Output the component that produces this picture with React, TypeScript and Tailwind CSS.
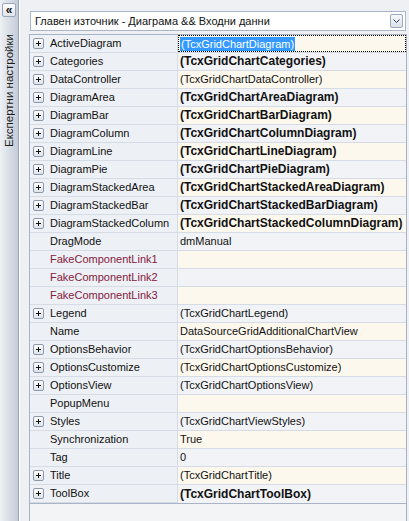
import React from 'react'

type Row = {
  name: string
  value?: string
  expand?: boolean
  bold?: boolean
  fake?: boolean
}

const rows: Row[] = [
  { name: 'ActiveDiagram', value: '(TcxGridChartDiagram)', expand: true },
  { name: 'Categories', value: '(TcxGridChartCategories)', expand: true, bold: true },
  { name: 'DataController', value: '(TcxGridChartDataController)', expand: true },
  { name: 'DiagramArea', value: '(TcxGridChartAreaDiagram)', expand: true, bold: true },
  { name: 'DiagramBar', value: '(TcxGridChartBarDiagram)', expand: true, bold: true },
  { name: 'DiagramColumn', value: '(TcxGridChartColumnDiagram)', expand: true, bold: true },
  { name: 'DiagramLine', value: '(TcxGridChartLineDiagram)', expand: true, bold: true },
  { name: 'DiagramPie', value: '(TcxGridChartPieDiagram)', expand: true, bold: true },
  { name: 'DiagramStackedArea', value: '(TcxGridChartStackedAreaDiagram)', expand: true, bold: true },
  { name: 'DiagramStackedBar', value: '(TcxGridChartStackedBarDiagram)', expand: true, bold: true },
  { name: 'DiagramStackedColumn', value: '(TcxGridChartStackedColumnDiagram)', expand: true, bold: true },
  { name: 'DragMode', value: 'dmManual' },
  { name: 'FakeComponentLink1', fake: true },
  { name: 'FakeComponentLink2', fake: true },
  { name: 'FakeComponentLink3', fake: true },
  { name: 'Legend', value: '(TcxGridChartLegend)', expand: true },
  { name: 'Name', value: 'DataSourceGridAdditionalChartView' },
  { name: 'OptionsBehavior', value: '(TcxGridChartOptionsBehavior)', expand: true },
  { name: 'OptionsCustomize', value: '(TcxGridChartOptionsCustomize)', expand: true },
  { name: 'OptionsView', value: '(TcxGridChartOptionsView)', expand: true },
  { name: 'PopupMenu' },
  { name: 'Styles', value: '(TcxGridChartViewStyles)', expand: true },
  { name: 'Synchronization', value: 'True' },
  { name: 'Tag', value: '0' },
  { name: 'Title', value: '(TcxGridChartTitle)', expand: true },
  { name: 'ToolBox', value: '(TcxGridChartToolBox)', expand: true, bold: true },
]

function PlusBox() {
  return (
    <svg width="11" height="11" viewBox="0 0 11 11" className="shrink-0">
      <defs>
        <linearGradient id="pb" x1="0" y1="0" x2="0" y2="1">
          <stop offset="0" stopColor="#ffffff" />
          <stop offset="1" stopColor="#dde2ea" />
        </linearGradient>
      </defs>
      <rect x="0.5" y="0.5" width="10" height="10" rx="1.5" fill="url(#pb)" stroke="#8d98aa" />
      <path d="M3 5.5H8M5.5 3V8" stroke="#111" strokeWidth="1" />
    </svg>
  )
}

export default function App() {
  return (
    <div
      className="flex h-[521px] w-[409px] overflow-hidden bg-[#eef0f4] text-[11px] text-[#111]"
      style={{ fontFamily: '"Liberation Sans", Arial, sans-serif' }}
    >
      {/* collapsed side tab */}
      <div className="flex w-[19px] shrink-0 flex-col items-center border-r border-[#98a4b7] bg-[linear-gradient(to_right,#eef1f5,#c4ccd8)]">
        <div className="mt-[3px] flex h-[14px] w-[14px] items-center justify-center rounded-[2px] border border-[#9aa6b9] bg-[linear-gradient(#ffffff,#dfe4ec)] text-[12px] leading-none font-bold">
          «
        </div>
        <div className="mt-[17px] rotate-180 text-[11.5px] leading-[13px] whitespace-nowrap text-[#1b1b1b] [writing-mode:vertical-rl]">
          Експертни настройки
        </div>
      </div>

      <div className="flex flex-1 flex-col border-l border-white pt-[11px] pl-[9px] pr-[2px]">
        {/* source combo */}
        <div className="ml-[1px] mr-[1px] flex h-[20px] items-center border border-[#aab5c7] bg-white pl-[4px] pr-[2px]">
          <span className="flex-1 whitespace-nowrap">Главен източник - Диаграма &amp;&amp; Входни данни</span>
          <div className="flex h-[14px] w-[13px] items-center justify-center rounded-[2px] border border-[#9aa8bd] bg-[linear-gradient(#f6f8fb,#dbe1ea)]">
            <svg width="7" height="5" viewBox="0 0 7 5">
              <path d="M0.5 0.5L3.5 3.5L6.5 0.5" stroke="#2c394d" fill="none" strokeWidth="1" />
            </svg>
          </div>
        </div>

        {/* property grid */}
        <div className="mt-[3px] flex flex-1 flex-col border-x border-t border-[#a6b2c5] bg-[#f3f4f6]">
          <div className="border-b border-[#a9b4c6]">
            {rows.map((r, i) => {
              const even = i % 2 === 0
              const selected = i === 0
              return (
                <div key={r.name} className="flex h-[18px] leading-[17px]">
                  <div className="flex w-[148px] shrink-0 items-center border-r border-b border-[#d5dce6] bg-[#edf0f4] pl-[3px]">
                    <div className="w-[17px]">{r.expand && <PlusBox />}</div>
                    <span className={r.fake ? 'text-[#852040]' : ''}>{r.name}</span>
                  </div>
                  <div
                    className={`relative flex flex-1 items-center overflow-hidden whitespace-nowrap pl-[2px] ${
                      i === rows.length - 1 ? '' : 'border-b border-[#d5dce6]'
                    } ${even ? 'bg-[#fdf8ed]' : 'bg-[#f1f3f6]'}`}
                  >
                    {selected && (
                      <div className="absolute inset-0 border border-dotted border-black" />
                    )}
                    {r.value && (
                      <span
                        className={`${r.bold ? 'text-[12px] font-bold' : ''} ${
                          selected ? 'bg-[#3399ff] px-[1px] text-white leading-[14px]' : ''
                        }`}
                      >
                        {r.value}
                      </span>
                    )}
                  </div>
                </div>
              )
            })}
          </div>
        </div>
      </div>
    </div>
  )
}
